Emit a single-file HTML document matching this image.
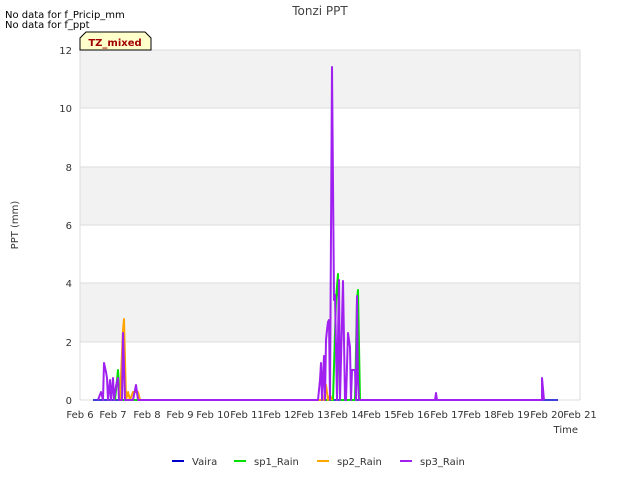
<!DOCTYPE html>
<html><head><style>body{margin:0;background:#fff}svg{display:block;font-family:"DejaVu Sans",sans-serif}</style></head>
<body>
<svg width="640" height="480" viewBox="0 0 640 480">
<rect x="80" y="50" width="500" height="58" fill="#f2f2f2"/>
<rect x="80" y="167" width="500" height="58" fill="#f2f2f2"/>
<rect x="80" y="283" width="500" height="59" fill="#f2f2f2"/>
<g stroke="#dcdcdc" stroke-width="1">
<line x1="80" y1="50" x2="580" y2="50"/><line x1="80" y1="108" x2="580" y2="108"/><line x1="80" y1="167" x2="580" y2="167"/><line x1="80" y1="225" x2="580" y2="225"/><line x1="80" y1="283" x2="580" y2="283"/><line x1="80" y1="342" x2="580" y2="342"/><line x1="80" y1="400" x2="580" y2="400"/>
<line x1="80" y1="50" x2="80" y2="400"/><line x1="580" y1="50" x2="580" y2="400"/>
</g>
<g font-size="10" fill="#333" text-anchor="end">
<text x="72" y="54">12</text><text x="72" y="112">10</text><text x="72" y="171">8</text><text x="72" y="229">6</text><text x="72" y="287">4</text><text x="72" y="346">2</text><text x="72" y="404">0</text>
</g>
<g font-size="10" fill="#333" text-anchor="middle">
<text x="80" y="418">Feb 6</text><text x="113" y="418">Feb 7</text><text x="147" y="418">Feb 8</text><text x="180" y="418">Feb 9</text><text x="213" y="418">Feb 10</text><text x="247" y="418">Feb 11</text><text x="280" y="418">Feb 12</text><text x="313" y="418">Feb 13</text><text x="347" y="418">Feb 14</text><text x="380" y="418">Feb 15</text><text x="413" y="418">Feb 16</text><text x="447" y="418">Feb 17</text><text x="480" y="418">Feb 18</text><text x="513" y="418">Feb 19</text><text x="547" y="418">Feb 20</text><text x="580" y="418">Feb 21</text>
</g>
<text x="578" y="433" font-size="10" fill="#333" text-anchor="end">Time</text>
<text x="18" y="225" font-size="10" fill="#333" text-anchor="middle" transform="rotate(-90 18 225)">PPT (mm)</text>
<text x="320" y="15" font-size="12" fill="#444" text-anchor="middle">Tonzi PPT</text>
<text x="5" y="18" font-size="10" fill="#000">No data for f_Pricip_mm</text>
<text x="5" y="28" font-size="10" fill="#000">No data for f_ppt</text>
<path d="M80 50 L80 38 L86 32 L145 32 L151 38 L151 50 Z" fill="#ffffcc" stroke="#000"/>
<text x="115" y="46" font-size="10" font-weight="bold" fill="#a00000" text-anchor="middle">TZ_mixed</text>
<line x1="93" y1="400" x2="558" y2="400" stroke="#0000cc" stroke-width="1.5"/>
<g fill="none" stroke-width="2" stroke-linejoin="round">
<polyline stroke="#00e000" points="115,400 118,370 120,400 333,400 336,300 338,274 340,400 355,400 357,300 358,290 360,400"/>
<polyline stroke="#ffa500" points="120,400 123,330 124,319 126,400 128,392 130,400 133,392 138,392 140,400 324,400 326,385 328,400 330,395 332,400"/>
<polyline stroke="#a020f0" points="98,400 101,392 103,400 104,363 106,372 107,378 108,400 110,380 111,400 113,378 114,400 116,386 118,378 119,400 122,400 123,333 125,400 133,400 136,385 138,400 318,400 320,380 321,363 322,400 324,356 325,400 326,340 327,330 328,322 329,320 330,400 332,67 334,300 335,295 337,400 339,280 340,400 343,281 345,400 346,400 348,333 349,340 350,347 351,400 352,370 355,370 356,400 357,296 358,380 359,400 435,400 436,393 437,400 542,400 542,378 544,400"/>
</g>
<g font-size="10" fill="#333">
<line x1="172" y1="461" x2="184" y2="461" stroke="#0000cc" stroke-width="2"/><text x="192" y="465">Vaira</text>
<line x1="234" y1="461" x2="246" y2="461" stroke="#00e000" stroke-width="2"/><text x="254" y="465">sp1_Rain</text>
<line x1="317" y1="461" x2="329" y2="461" stroke="#ffa500" stroke-width="2"/><text x="337" y="465">sp2_Rain</text>
<line x1="400" y1="461" x2="412" y2="461" stroke="#a020f0" stroke-width="2"/><text x="420" y="465">sp3_Rain</text>
</g>
</svg>
</body></html>
